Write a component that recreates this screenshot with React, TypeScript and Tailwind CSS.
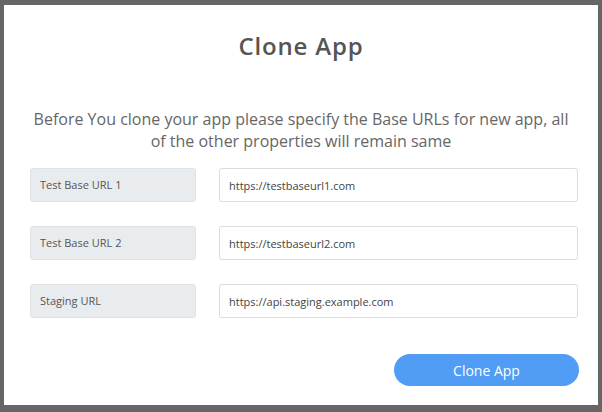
import React from 'react';

const fields = [
  { label: 'Test Base URL 1', value: 'https://testbaseurl1.com' },
  { label: 'Test Base URL 2', value: 'https://testbaseurl2.com' },
  { label: 'Staging URL', value: 'https://api.staging.example.com' },
];

export default function App() {
  return (
    <div
      className="w-[602px] h-[412px] bg-[#666666] pt-[5px] pl-[4px] pr-[4px] pb-[7px]"
      style={{ fontFamily: '"Open Sans", "Noto Sans", sans-serif' }}
    >
      <div className="w-full h-full bg-white flex flex-col">
        {/* Header */}
        <h1 className="text-center text-[24px] leading-[28px] font-semibold tracking-[0.8px] text-[#555555] mt-[27px]">
          Clone App
        </h1>

        {/* Description */}
        <p className="text-center text-[16px] leading-[22px] text-[#666666] mt-[48px] px-[27px]">
          Before You clone your app please specify the Base URLs for new app, all of the other properties will remain same
        </p>

        {/* Fields */}
        <div className="flex flex-col gap-[24px] mt-[16px] pl-[26px] pr-[20px]">
          {fields.map((f) => (
            <div key={f.label} className="flex items-center gap-[23px]">
              <div className="w-[166px] h-[34px] flex items-center px-[9px] bg-[#e9ecef] border border-[#dfe2e5] rounded-[3px] text-[11px] text-[#555555]">
                {f.label}
              </div>
              <input
                readOnly
                value={f.value}
                className="flex-1 h-[34px] px-[9px] border border-[#dcdcdc] rounded-[3px] text-[11px] text-[#444444] outline-none"
              />
            </div>
          ))}
        </div>

        {/* Footer */}
        <div className="flex justify-end mt-[36px] pr-[19px]">
          <button className="w-[185px] h-[32px] rounded-full bg-[#519cf5] text-white text-[14px]">
            Clone App
          </button>
        </div>
      </div>
    </div>
  );
}
